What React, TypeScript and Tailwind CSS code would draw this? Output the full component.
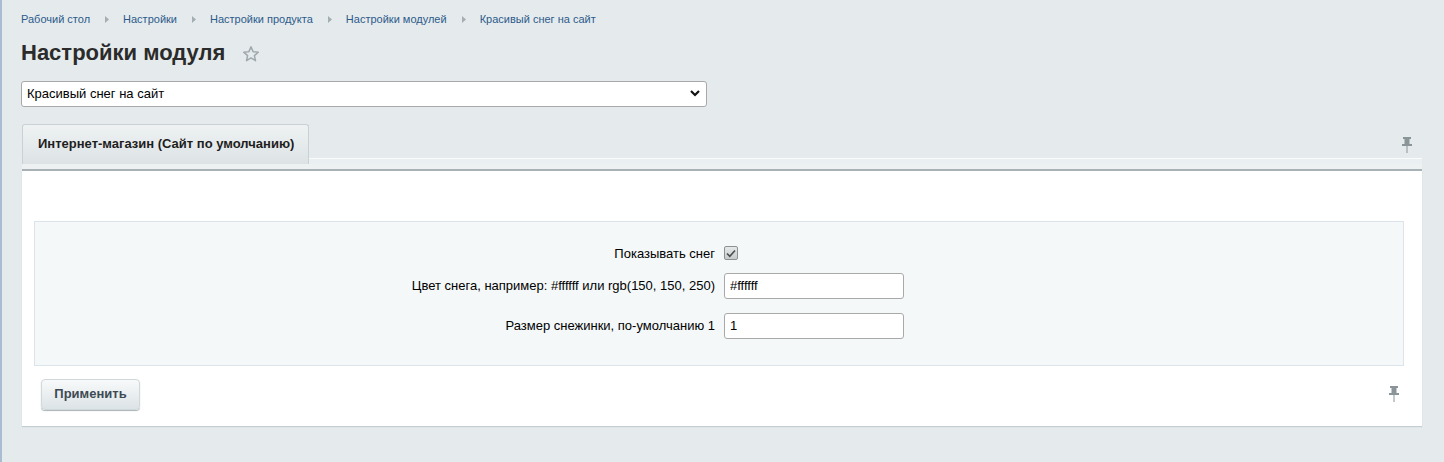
import { useState } from "react"

const crumbs = ["Рабочий стол", "Настройки", "Настройки продукта", "Настройки модулей", "Красивый снег на сайт"]

function Pin() {
  return (
    <svg width="12" height="16" viewBox="0 0 12 16">
      <rect x="2" y="0" width="8" height="2" fill="#8a9499" />
      <rect x="3.5" y="2" width="5" height="5" fill="#8a9499" />
      <rect x="1" y="7" width="10" height="2" fill="#8a9499" />
      <rect x="5.5" y="9" width="1" height="7" fill="#8a9499" />
    </svg>
  )
}

function Row({ label, children, className }: { label: string; children: React.ReactNode; className?: string }) {
  return (
    <div className={"grid grid-cols-[680px_1fr] items-center gap-[9px] " + (className ?? "")}>
      <div className="text-right text-[13px] leading-[15px] text-black">{label}</div>
      <div className="flex items-center">{children}</div>
    </div>
  )
}

export default function App() {
  const [show, setShow] = useState(true)
  const [color, setColor] = useState("#ffffff")
  const [size, setSize] = useState("1")

  return (
    <div
      className="h-[462px] w-[1444px] border-l-2 border-[#a9bdd0] bg-[#e5ebed] pl-[19px] pr-[20px] pt-[11px]"
      style={{ fontFamily: "Arial, 'Liberation Sans', sans-serif" }}
    >
      <div className="flex items-center text-[11px] text-[#2c5a8a]">
        {crumbs.map((c, i) => (
          <div key={c} className="flex items-center">
            <span>{c}</span>
            {i < crumbs.length - 1 && (
              <svg width="4" height="7" viewBox="0 0 4 7" className="ml-[15px] mr-[14px]">
                <path d="M0 0 L4 3.5 L0 7 Z" fill="#a5aeb3" />
              </svg>
            )}
          </div>
        ))}
      </div>

      <div className="mt-[12px] flex items-center">
        <h1 className="text-[22px] font-bold leading-[26px] text-[#2b2b2b]">Настройки модуля</h1>
        <svg width="18" height="18" viewBox="0 0 24 24" className="ml-[17px] mt-[2px]">
          <path
            d="M12 2.5 L14.8 8.9 L21.7 9.5 L16.5 14.1 L18 20.9 L12 17.3 L6 20.9 L7.5 14.1 L2.3 9.5 L9.2 8.9 Z"
            fill="none"
            stroke="#a0a8ad"
            strokeWidth="2"
            strokeLinejoin="round"
          />
        </svg>
      </div>

      <div className="mt-[15px] flex h-[26px] w-[686px] items-center justify-between rounded-[3px] border border-[#a9a9a9] bg-white pl-[5px] pr-[6px] text-[13px] text-black">
        <span>Красивый снег на сайт</span>
        <svg width="10" height="7" viewBox="0 0 10 7">
          <path d="M1 1 L5 5 L9 1" fill="none" stroke="#111" strokeWidth="2.2" />
        </svg>
      </div>

      <div className="ml-[1px] mt-[17px] w-[1400px]">
        <div className="flex items-end">
          <div className="flex h-[40px] w-[287px] items-center rounded-t-[3px] border border-b-0 border-[#c9d1d4] bg-gradient-to-b from-[#eef2f3] to-[#dde3e5] pl-[15px] text-[13px] font-bold text-[#1e1e1e]">
            Интернет-магазин (Сайт по умолчанию)
          </div>
          <div className="flex flex-1 flex-col">
            <div className="flex justify-end pb-[5px] pr-[9px]">
              <Pin />
            </div>
            <div className="h-[6px] border-t border-[#fafcfc] bg-[#eaf0f1]" />
          </div>
        </div>
        <div className="h-[7px] border-b-2 border-[#a8b1b5] bg-[#edf1f2]" />

        <div className="bg-white pb-[16px] pl-[12px] pr-[18px] pt-[50px] shadow-[0_1px_1px_#c4cdd1]">
          <div className="flex flex-col border border-[#dae4ea] bg-[#f4f8f9] pb-[26px] pt-[24px]">
            <Row label="Показывать снег">
              <button
                onClick={() => setShow(!show)}
                className="flex h-[14px] w-[14px] items-center justify-center rounded-[2px] border border-[#8d9194] bg-gradient-to-b from-[#e6e8e9] to-[#c8cbcd]"
              >
                {show && (
                  <svg width="10" height="9" viewBox="0 0 10 9">
                    <path d="M1 4.5 L3.8 7.3 L9 1.5" fill="none" stroke="#4a4f52" strokeWidth="1.6" />
                  </svg>
                )}
              </button>
            </Row>
            <Row label="Цвет снега, например: #ffffff или rgb(150, 150, 250)" className="mt-[12px]">
              <input
                value={color}
                onChange={(e) => setColor(e.target.value)}
                className="h-[26px] w-[180px] rounded-[3px] border border-[#a9a9a9] bg-white px-[5px] text-[13px] text-black outline-none"
              />
            </Row>
            <Row label="Размер снежинки, по-умолчанию 1" className="mt-[14px]">
              <input
                value={size}
                onChange={(e) => setSize(e.target.value)}
                className="h-[26px] w-[180px] rounded-[3px] border border-[#a9a9a9] bg-white px-[5px] text-[13px] text-black outline-none"
              />
            </Row>
          </div>

          <div className="mt-[13px] flex items-center justify-between pl-[7px] pr-[4px]">
            <button className="h-[31px] w-[99px] rounded-[4px] border border-[#d1d8db] bg-gradient-to-b from-[#f8fafa] to-[#dce3e6] text-[13px] font-bold text-[#3d4a55] shadow-[0_1px_1px_#a9b2b6]">
              Применить
            </button>
            <Pin />
          </div>
        </div>
      </div>
    </div>
  )
}
